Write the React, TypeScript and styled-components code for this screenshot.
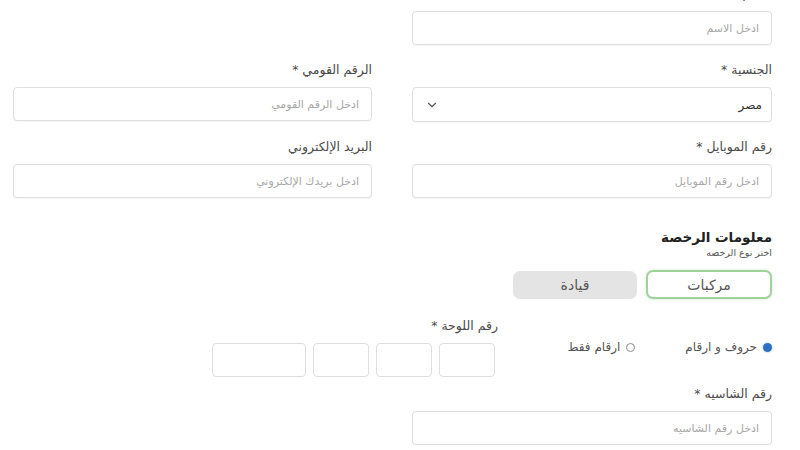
import { ChevronDown } from "lucide-react";
import styled, { createGlobalStyle } from "styled-components";

const GlobalStyle = createGlobalStyle`
  html, body {
    margin: 0;
    padding: 0;
    background: #ffffff;
    overflow: hidden;
  }
  body {
    font-family: "DejaVu Sans", "Noto Sans", sans-serif;
  }
`;

const Page = styled.div`
  direction: rtl;
  width: 800px;
  box-sizing: border-box;
  padding: 0 28px 0 13px;
  margin-top: -14px;
  display: flex;
  flex-direction: column;
`;

const FieldGrid = styled.div`
  display: grid;
  grid-template-columns: 360px 359px;
  column-gap: 40px;
  row-gap: 17px;
`;

const Field = styled.div<{ $width?: number }>`
  display: flex;
  flex-direction: column;
  width: ${(p) => (p.$width ? `${p.$width}px` : "auto")};
`;

const Label = styled.label`
  font-size: 12.5px;
  line-height: 16px;
  color: #4a4a4a;
  margin-bottom: 9px;
`;

const TextInput = styled.input`
  height: 34px;
  box-sizing: border-box;
  border: 1px solid #dedede;
  border-radius: 4px;
  padding: 0 12px;
  font-family: inherit;
  font-size: 11px;
  color: #333;
  background: #fff;
  box-shadow: 0 1px 1px rgba(0, 0, 0, 0.04);
  outline: none;
  &::placeholder {
    color: #a8a8a8;
  }
`;

const SelectBox = styled.div`
  height: 35px;
  box-sizing: border-box;
  border: 1px solid #dedede;
  border-radius: 4px;
  padding: 0 9px 0 12px;
  display: flex;
  align-items: center;
  justify-content: space-between;
  font-size: 12px;
  color: #333;
  box-shadow: 0 1px 1px rgba(0, 0, 0, 0.04);
  svg {
    color: #555;
  }
`;

const Section = styled.div`
  margin-top: 30px;
  display: flex;
  flex-direction: column;
`;

const Heading = styled.h3`
  margin: 0;
  font-size: 13.5px;
  line-height: 18px;
  font-weight: 700;
  color: #222;
`;

const SubHeading = styled.div`
  font-size: 9.5px;
  line-height: 13px;
  color: #555;
`;

const TypeRow = styled.div`
  display: flex;
  gap: 9px;
  margin-top: 11px;
  align-items: center;
`;

const TypeButton = styled.button<{ $active?: boolean }>`
  width: ${(p) => (p.$active ? 126 : 124)}px;
  height: ${(p) => (p.$active ? 29 : 28)}px;
  box-sizing: border-box;
  border-radius: 7px;
  border: ${(p) => (p.$active ? "2px solid #9fd39a" : "none")};
  background: ${(p) => (p.$active ? "#ffffff" : "#e4e4e4")};
  box-shadow: ${(p) => (p.$active ? "0 0 3px rgba(120, 190, 120, 0.35)" : "none")};
  font-family: inherit;
  font-size: 14px;
  color: #555;
  padding: 0;
`;

const PlateRow = styled.div`
  display: flex;
  align-items: flex-start;
  margin-top: 19px;
`;

const RadioGroup = styled.div`
  width: 277px;
  display: flex;
  gap: 50px;
  margin-top: 22px;
`;

const RadioItem = styled.div`
  display: flex;
  align-items: center;
  gap: 6px;
  font-size: 12px;
  line-height: 14px;
  color: #555;
`;

const RadioDot = styled.span<{ $checked?: boolean }>`
  width: 9px;
  height: 9px;
  border-radius: 50%;
  box-sizing: border-box;
  border: 1px solid ${(p) => (p.$checked ? "#2d6fc4" : "#8a8a8a")};
  background: ${(p) => (p.$checked ? "#2d6fc4" : "#fff")};
  box-shadow: ${(p) => (p.$checked ? "0 0 2px rgba(45, 111, 196, 0.6)" : "none")};
`;

const PlateBoxes = styled.div`
  display: flex;
  gap: 7px;
`;

const PlateBox = styled.input<{ $wide?: boolean }>`
  width: ${(p) => (p.$wide ? 94 : 56)}px;
  height: 34px;
  box-sizing: border-box;
  border: 1px solid #dedede;
  border-radius: 4px;
  background: #fff;
  outline: none;
`;

const PlateLabel = styled(Label)`
  margin-right: -3px;
`;

const ChassisField = styled(Field)`
  margin-top: 9px;
`;

export default function App() {
  return (
    <>
      <GlobalStyle />
      <Page>
        <FieldGrid>
          <Field>
            <Label>الاسم *</Label>
            <TextInput placeholder="ادخل الاسم" />
          </Field>
          <div />
          <Field>
            <Label>الجنسية *</Label>
            <SelectBox>
              <span>مصر</span>
              <ChevronDown size={14} strokeWidth={2} />
            </SelectBox>
          </Field>
          <Field>
            <Label>الرقم القومي *</Label>
            <TextInput placeholder="ادخل الرقم القومي" />
          </Field>
          <Field>
            <Label>رقم الموبايل *</Label>
            <TextInput placeholder="ادخل رقم الموبايل" />
          </Field>
          <Field>
            <Label>البريد الإلكتروني</Label>
            <TextInput placeholder="ادخل بريدك الإلكتروني" />
          </Field>
        </FieldGrid>

        <Section>
          <Heading>معلومات الرخصة</Heading>
          <SubHeading>اختر نوع الرخصه</SubHeading>
          <TypeRow>
            <TypeButton $active>مركبات</TypeButton>
            <TypeButton>قيادة</TypeButton>
          </TypeRow>
        </Section>

        <PlateRow>
          <RadioGroup>
            <RadioItem>
              <RadioDot $checked />
              حروف و ارقام
            </RadioItem>
            <RadioItem>
              <RadioDot />
              ارقام فقط
            </RadioItem>
          </RadioGroup>
          <Field>
            <PlateLabel>رقم اللوحة *</PlateLabel>
            <PlateBoxes>
              <PlateBox />
              <PlateBox />
              <PlateBox />
              <PlateBox $wide />
            </PlateBoxes>
          </Field>
        </PlateRow>

        <ChassisField $width={360}>
          <Label>رقم الشاسيه *</Label>
          <TextInput placeholder="ادخل رقم الشاسيه" />
        </ChassisField>
      </Page>
    </>
  );
}
